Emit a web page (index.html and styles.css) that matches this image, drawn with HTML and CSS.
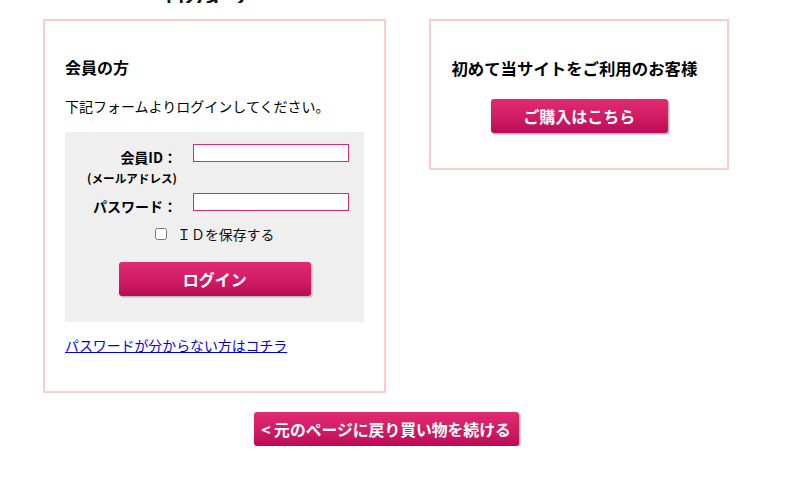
FILE: index.html
```html
<!DOCTYPE html>
<html lang="ja">
<head>
<meta charset="utf-8">
<title>ログイン</title>
<link rel="stylesheet" href="styles.css">
</head>
<body>
<div class="page">
  <div class="peek">ログイン</div>
  <div class="boxes">
    <section class="box box-member">
      <h2 class="box-title">会員の方</h2>
      <p class="lead">下記フォームよりログインしてください。</p>
      <form class="login-form">
        <div class="row">
          <div class="label">
            <span class="label-main">会員ID：</span>
            <span class="label-sub">(メールアドレス)</span>
          </div>
          <input class="field" type="text">
        </div>
        <div class="row row-pass">
          <div class="label"><span class="label-main">パスワード：</span></div>
          <input class="field" type="password">
        </div>
        <label class="remember"><input type="checkbox" class="check"><span>ＩＤを保存する</span></label>
        <div class="btn-wrap"><button type="button" class="btn btn-login">ログイン</button></div>
      </form>
      <a class="forgot" href="#">パスワードが分からない方はコチラ</a>
    </section>
    <section class="box box-new">
      <h2 class="box-title">初めて当サイトをご利用のお客様</h2>
      <div class="btn-wrap"><button type="button" class="btn btn-buy">ご購入はこちら</button></div>
    </section>
  </div>
  <div class="back-wrap"><button type="button" class="btn btn-back">&lt; 元のページに戻り買い物を続ける</button></div>
</div>
</body>
</html>
```
FILE: styles.css
```css
* { box-sizing: border-box; }
html, body { margin: 0; padding: 0; background: #fff; }
body {
  font-family: "Noto Sans CJK JP", "Noto Sans", sans-serif;
  color: #000;
  font-size: 13px;
}
.page {
  width: 686px;
  margin-left: 43px;
}
.peek {
  height: 3px;
  overflow: hidden;
  font-size: 20px;
  font-weight: bold;
  line-height: 3px;
  padding-left: 122px;
  color: #111;
  display: flex;
  align-items: flex-end;
}
.boxes {
  display: flex;
  align-items: flex-start;
  gap: 43px;
  margin-top: 16px;
}
.box {
  border: 2px solid #ffcccc;
  background: #fff;
}
.box-member {
  width: 344px;
  padding: 0 20px 36px;
}
.box-new {
  width: 300px;
  padding: 0 20px 35px;
}
.box-title {
  margin: 35px 0 0;
  font-size: 16px;
  line-height: 24px;
  font-weight: bold;
}
.box-new .box-title {
  font-size: 16.4px;
}
.box-member .box-title { margin-top: 34px; }
.lead {
  margin: 17px 0 0;
  font-size: 14px;
  line-height: 20px;
}
.login-form {
  margin-top: 16px;
  background: #efefef;
  padding: 12px 0 25px;
  height: 190px;
}
.row {
  display: flex;
  align-items: flex-start;
  gap: 16px;
}
.row-pass { margin-top: 7px; }
.label {
  width: 112px;
  padding-top: 3px;
  display: flex;
  flex-direction: column;
  align-items: flex-end;
  font-weight: bold;
}
.label-main {
  font-size: 14px;
  line-height: 20px;
}
.label-sub {
  font-size: 11.6px;
  line-height: 16px;
  margin-top: 3px;
}
.field {
  width: 156px;
  height: 18px;
  border: 1px solid #dd2a6e;
  background: #fff;
  margin: 0;
  padding: 0 3px;
  outline: none;
}
.remember {
  display: flex;
  align-items: center;
  justify-content: center;
  margin-top: 8px;
  font-size: 13.9px;
  line-height: 20px;
  color: #111;
}
.check {
  width: 12px;
  height: 12px;
  margin: 0 10px 0 0;
}
.btn-wrap {
  display: flex;
  justify-content: center;
}
.btn {
  font-family: "Noto Sans CJK JP", "Noto Sans", sans-serif;
  border: none;
  border-radius: 3px;
  color: #fff;
  font-weight: bold;
  background: linear-gradient(#e22a70, #d01c64 55%, #b80c55);
  box-shadow: 1px 1px 0 #b9b9b9, 2px 2px 1px #d0d0d0;
  padding: 0;
  cursor: pointer;
}
.btn-login {
  margin-top: 18px;
  width: 192px;
  height: 34px;
  font-size: 16px;
}
.btn-buy {
  margin-top: 19px;
  width: 177px;
  height: 34px;
  font-size: 16px;
}
.forgot {
  display: inline-block;
  margin-top: 13px;
  font-size: 13.9px;
  line-height: 20px;
  color: #0000ee;
  text-decoration: underline;
}
.back-wrap {
  display: flex;
  justify-content: center;
  margin-top: 19px;
}
.btn-back {
  width: 265px;
  height: 34px;
  font-size: 15.8px;
}
```
